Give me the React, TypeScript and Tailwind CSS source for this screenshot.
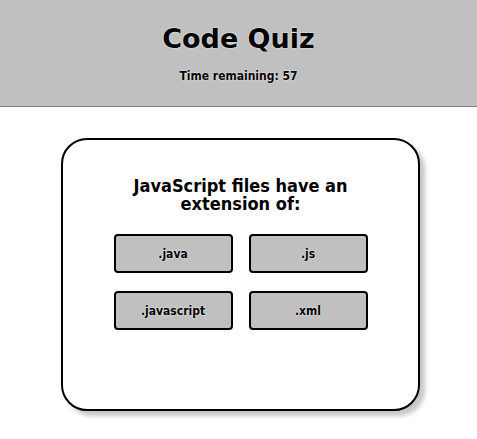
import React from "react";

const answers = [".java", ".js", ".javascript", ".xml"];

export default function App() {
  return (
    <div className="min-h-[439px] bg-white font-['DejaVu_Sans_Condensed','DejaVu_Sans',sans-serif] font-bold text-black">
      <header className="h-[107px] bg-[#c0c0c0] border-b border-[#808080] flex flex-col items-center pt-[19px]">
        <h1 className="font-['DejaVu_Sans',sans-serif] text-[27px] leading-[40px] [text-shadow:0_0_2px_#fff]">Code Quiz</h1>
        <p className="mt-[9px] text-[12px] leading-[16px] [text-shadow:0_0_2px_#fff]">Time remaining: 57</p>
      </header>
      <main className="flex justify-center pt-[31px]">
        <section className="ml-[4px] w-[359px] h-[273px] border-2 border-black rounded-[26px] bg-white shadow-[5px_5px_4px_#c8c8c8] flex flex-col items-center pt-[37px]">
          <h2 className="w-[240px] text-center text-[18px] leading-[18px]">JavaScript files have an extension of:</h2>
          <div className="mt-[21px] grid grid-cols-[119px_119px] gap-x-[16px] gap-y-[18px]">
            {answers.map((a) => (
              <button
                key={a}
                className="h-[39px] bg-[#c0c0c0] border-2 border-black rounded-[4px] text-[12px] [text-shadow:0_0_2px_#fff]"
              >
                {a}
              </button>
            ))}
          </div>
        </section>
      </main>
    </div>
  );
}
